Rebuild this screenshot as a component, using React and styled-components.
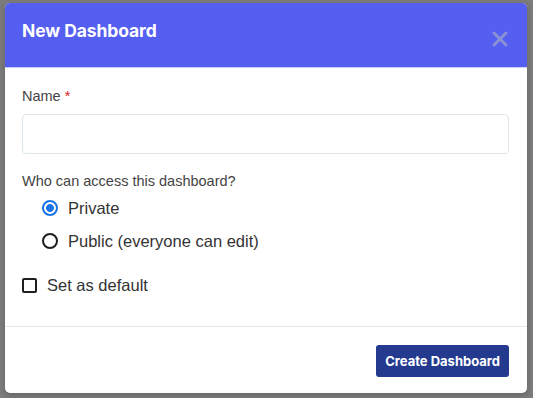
import React from "react";
import styled, { createGlobalStyle } from "styled-components";

const GlobalStyle = createGlobalStyle`
    html, body {
        margin: 0;
        padding: 0;
        background: #7c7c7c;
    }
    * {
        box-sizing: border-box;
    }
`;

function App() {
    return (
        <>
            <GlobalStyle />
            <Backdrop>
                <Modal>
                    <Header>
                        <Title>New Dashboard</Title>
                        <CloseButton aria-label="Close">
                            <svg width="18" height="16" viewBox="0 0 18 16">
                                <path
                                    d="M3 2 L15 14 M15 2 L3 14"
                                    stroke="#8a90d4"
                                    strokeWidth="3"
                                    strokeLinecap="round"
                                />
                            </svg>
                        </CloseButton>
                    </Header>
                    <Body>
                        <Label>
                            Name <Required>*</Required>
                        </Label>
                        <TextInput type="text" />
                        <Label style={{ marginTop: 19 }}>Who can access this dashboard?</Label>
                        <RadioGroup>
                            <Option>
                                <Radio type="radio" name="access" defaultChecked />
                                Private
                            </Option>
                            <Option>
                                <Radio type="radio" name="access" />
                                Public (everyone can edit)
                            </Option>
                        </RadioGroup>
                        <CheckRow>
                            <Checkbox type="checkbox" />
                            Set as default
                        </CheckRow>
                    </Body>
                    <Footer>
                        <PrimaryButton>Create Dashboard</PrimaryButton>
                    </Footer>
                </Modal>
            </Backdrop>
        </>
    );
}

export default App;

const Backdrop = styled.div`
    width: 533px;
    height: 398px;
    padding: 3px 6px 5px 5px;
`;
const Modal = styled.div`
    width: 522px;
    height: 390px;
    background: #fff;
    border-radius: 5px;
    overflow: hidden;
    display: flex;
    flex-direction: column;
    box-shadow: 0 2px 6px rgba(0, 0, 0, 0.2);
`;
const Header = styled.div`
    height: 65px;
    flex-shrink: 0;
    background: #545ef0;
    display: flex;
    align-items: center;
    justify-content: space-between;
    padding: 0 18px 0 17px;
    border-bottom: 1px solid #c9cdf7;
`;
const Title = styled.h3`
    margin: 0 0 10px 0;
    color: #fff;
    font-family: "Inter", "Liberation Sans", sans-serif;
    font-weight: 700;
    font-size: 17.5px;
    letter-spacing: -0.1px;
`;
const CloseButton = styled.button`
    border: 0;
    background: none;
    padding: 0;
    margin-top: 8px;
    display: flex;
    cursor: pointer;
`;
const Body = styled.div`
    flex: 1;
    padding: 20px 18px 0 17px;
    display: flex;
    flex-direction: column;
    font-family: "Liberation Sans", Arial, sans-serif;
    color: #333;
    border-bottom: 1px solid #e2e8ec;
`;
const Label = styled.div`
    font-size: 14.5px;
    line-height: 16px;
    color: #444;
`;
const Required = styled.span`
    color: #e02424;
`;
const TextInput = styled.input`
    margin-top: 10px;
    height: 40px;
    width: 100%;
    border: 1px solid #dbe4ea;
    border-radius: 4px;
    outline: none;
`;
const RadioGroup = styled.div`
    display: flex;
    flex-direction: column;
    gap: 13px;
    margin-top: 9px;
    padding-left: 20px;
`;
const Option = styled.label`
    display: flex;
    align-items: center;
    gap: 10px;
    height: 20px;
    font-size: 16.5px;
    color: #333;
`;
const Radio = styled.input`
    appearance: none;
    margin: 0;
    width: 16px;
    height: 16px;
    border: 2px solid #1f1f1f;
    border-radius: 50%;
    background: #fff;
    &:checked {
        border-color: #1a73e8;
        background: radial-gradient(circle, #1a73e8 0 3.6px, #fff 4.2px);
    }
`;
const Checkbox = styled.input`
    appearance: none;
    margin: 0;
    width: 15px;
    height: 15px;
    border: 2px solid #1f1f1f;
    border-radius: 2px;
    background: #fff;
`;
const CheckRow = styled(Option)`
    margin-top: 24px;
`;
const Footer = styled.div`
    height: 66px;
    flex-shrink: 0;
    display: flex;
    align-items: center;
    justify-content: flex-end;
    padding: 0 18px 0 0;
`;
const PrimaryButton = styled.button`
    height: 32px;
    margin-top: 2px;
    padding: 0 9px;
    background: #233a8f;
    color: #fff;
    border: 0;
    border-radius: 3px;
    font-family: "Inter", "Liberation Sans", sans-serif;
    font-weight: 700;
    font-size: 13px;
    cursor: pointer;
`;
